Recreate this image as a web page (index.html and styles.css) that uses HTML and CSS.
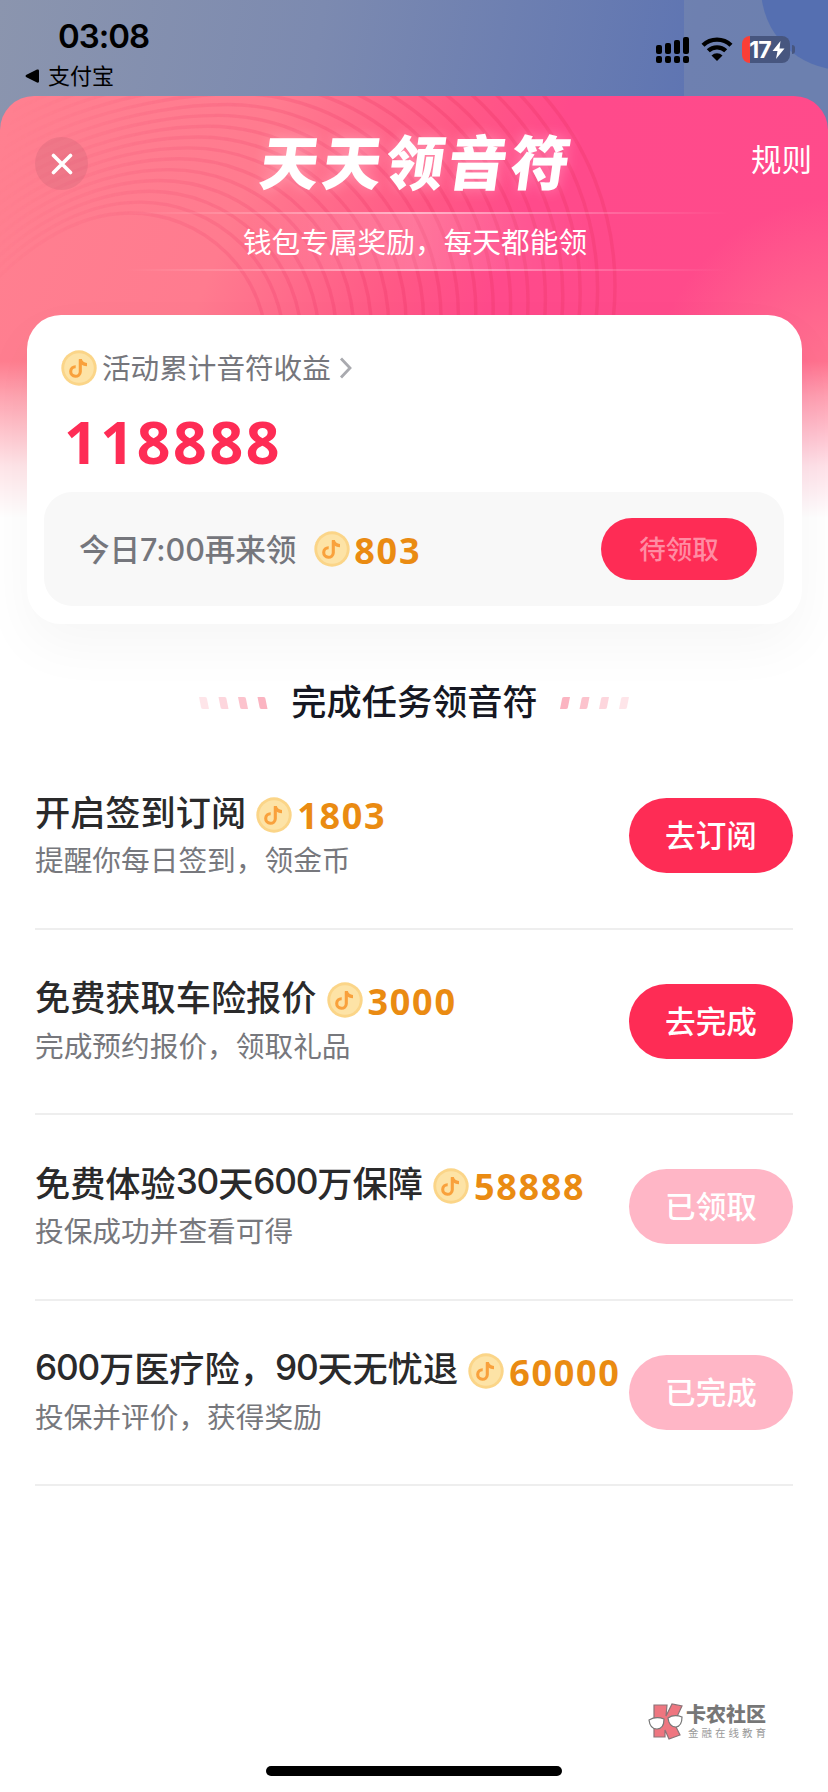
FILE: index.html
```html
<!DOCTYPE html>
<html lang="zh-CN">
<head>
<meta charset="utf-8">
<title>天天领音符</title>
<link rel="stylesheet" href="styles.css">
</head>
<body>
<svg width="0" height="0" class="defs">
  <symbol id="coin" viewBox="0 0 36 36">
    <circle cx="18" cy="18" r="17.7" fill="#fbd588"/>
    <circle cx="18" cy="18" r="14.8" fill="#fde3a6"/>
    <path d="M19.3 9.5v12.2a4.8 4.8 0 1 1-4.6-5" fill="none" stroke="#f9a13c" stroke-width="3.1"/>
    <path d="M17.8 9h3c.5 2.300 2.300 3.800 5.200 4v3.300c-3 0-5-1-6.500-2.500z" fill="#f9a13c"/>
  </symbol>
</svg>
<div class="screen">
  <header class="status">
    <svg class="status-bg" width="828" height="150" viewBox="0 0 828 150">
      <rect x="684" width="144" height="150" fill="#8593ae" opacity=".38"/>
      <circle cx="843" cy="-12" r="82" fill="#4e69b2" opacity=".75"/>
    </svg>
    <div class="status-left">
      <div class="time">03:08</div>
      <div class="back"><svg width="14" height="14" viewBox="0 0 14 14"><path d="M1 6q-1 1 0 2l11 5.500q2 .5 2-1v-11q0-1.500-2-1z"/></svg>支付宝</div>
    </div>
    <div class="status-right">
      <svg width="34" height="27" viewBox="0 0 34 27">
        <rect x="0" y="8" width="6" height="9" rx="2"/><rect x="9" y="6" width="6" height="11" rx="2"/><rect x="18" y="3" width="6" height="14" rx="2"/><rect x="27" y="0" width="6" height="17" rx="2"/>
        <rect x="0" y="19" width="6" height="7" rx="2"/><rect x="9" y="19" width="6" height="7" rx="2"/><rect x="18" y="19" width="6" height="7" rx="2"/><rect x="27" y="19" width="6" height="7" rx="2"/>
      </svg>
      <svg class="wifi" width="32" height="24" viewBox="0 0 32 24">
        <path d="M2 8.300a20 20 0 0 1 28 0M7.300 13.800a12.500 12.500 0 0 1 17.400 0" fill="none" stroke="#000" stroke-width="4.300"/>
        <path d="M10.500 18.500a8 8 0 0 1 11 0L16 24z"/>
      </svg>
      <div class="battery"><span>17</span><svg width="13" height="18" viewBox="0 0 13 18"><path d="M8.500 0 .5 10h5L4 18l8.500-10.500h-5z" fill="#fff"/></svg></div>
      <i class="nub"></i>
    </div>
  </header>
  <main class="sheet">
    <svg class="rings" width="828" height="420" viewBox="0 96 828 420">
      <defs>
        <linearGradient id="fade" gradientUnits="userSpaceOnUse" x1="0" x2="450" y1="96" y2="200"><stop offset=".03" stop-color="#fff" stop-opacity="0"/><stop offset=".35" stop-color="#fff" stop-opacity=".45"/><stop offset="1" stop-color="#fff"/></linearGradient>
        <mask id="ringMask" maskUnits="userSpaceOnUse" x="0" y="96" width="828" height="420"><rect x="0" y="96" width="828" height="420" fill="url(#fade)"/></mask>
      </defs>
      <g id="ringGroup" mask="url(#ringMask)" fill="none" stroke="#e8305f" stroke-opacity=".27" stroke-width="3.400"></g>
    </svg>
    <div class="topbar">
      <button class="close"><svg width="22" height="22" viewBox="0 0 22 22"><path d="M2.500 2.500l17 17m0-17l-17 17" stroke="#fff" stroke-width="3.600" stroke-linecap="round"/></svg></button>
      <h1>天天领音符</h1>
      <a class="rules">规则</a>
    </div>
    <p class="subtitle">钱包专属奖励，每天都能领</p>
    <section class="card">
      <div class="earn"><svg class="coin"><use href="#coin"/></svg><span>活动累计音符收益</span><svg class="chev" width="13" height="22" viewBox="0 0 13 22"><path d="M2 1.500 11 11l-9 9.500" fill="none" stroke="#a9aaaf" stroke-width="2.800"/></svg></div>
      <div class="total">118888</div>
      <div class="claim">
        <span class="when">今日7:00再来领</span>
        <svg class="coin"><use href="#coin"/></svg>
        <span class="amount">803</span>
        <button class="pill wait">待领取</button>
      </div>
    </section>
    <h2 class="section-title">
      <svg width="72" height="12" viewBox="0 0 72 12" fill="#fbb4c1"><path opacity=".35" d="M1 0h6q2 0 2 2l2 10H5q-2 0-2-2z"/><path opacity=".55" d="M20.500 0h6q2 0 2 2l2 10h-6q-2 0-2-2z"/><path opacity=".8" d="M40 0h6q2 0 2 2l2 10h-6q-2 0-2-2z"/><path d="M59.500 0h6q2 0 2 2l2 10h-6q-2 0-2-2z"/></svg>
      <span>完成任务领音符</span>
      <svg width="72" height="12" viewBox="0 0 72 12" fill="#fbb4c1"><path d="M3 2q0-2 2-2h6l-2 10q0 2-2 2H1z"/><path opacity=".8" d="M22.500 2q0-2 2-2h6l-2 10q0 2-2 2h-6z"/><path opacity=".55" d="M42 2q0-2 2-2h6l-2 10q0 2-2 2h-6z"/><path opacity=".35" d="M62 2q0-2 2-2h6l-2 10q0 2-2 2h-6z"/></svg>
    </h2>
    <ul class="tasks">
      <li><div class="info"><div class="name">开启签到订阅<svg class="coin"><use href="#coin"/></svg><span class="amount">1803</span></div><div class="desc">提醒你每日签到，领金币</div></div><button class="pill">去订阅</button></li>
      <li><div class="info"><div class="name">免费获取车险报价<svg class="coin"><use href="#coin"/></svg><span class="amount">3000</span></div><div class="desc">完成预约报价，领取礼品</div></div><button class="pill">去完成</button></li>
      <li><div class="info"><div class="name">免费体验<span class="num">30</span>天<span class="num">600</span>万保障<svg class="coin"><use href="#coin"/></svg><span class="amount">58888</span></div><div class="desc">投保成功并查看可得</div></div><button class="pill done">已领取</button></li>
      <li><div class="info"><div class="name"><span class="num">600</span>万医疗险，<span class="num">90</span>天无忧退<svg class="coin"><use href="#coin"/></svg><span class="amount">60000</span></div><div class="desc">投保并评价，获得奖励</div></div><button class="pill done">已完成</button></li>
    </ul>
    <footer class="brand">
      <svg width="36" height="37" viewBox="0 0 36 37">
        <path d="M6 2h13l-1 11L24 1l10 2-8 17 6 12-11 4-4-9v7H6z" fill="#ee7680" stroke="#8b7478" stroke-width="1.200"/>
        <path d="M1 17q7-4 15-1 0 10-7 10Q2 26 1 17zM20 15q6-4 14-1 0 9-6 10-7 0-8-9z" fill="#fff" stroke="#777" stroke-width="1.200"/>
      </svg>
      <div><b>卡农社区</b><small>金融在线教育</small></div>
    </footer>
    <div class="home"></div>
  </main>
</div>
<script src="rings.js"></script>
</body>
</html>
```
FILE: rings.js
```js
// Each ring: a gentle tail rising from the left edge, then a round arc down the right side.
const group = document.getElementById('ringGroup');
for (let i = 0; i < 21; i++) {
  const cx = 130 + 9.75 * i;
  const cy = 350 - 3.2 * i;
  const r = 137 + 7.65 * i;
  const top = cy - r;
  const p = document.createElementNS('http://www.w3.org/2000/svg', 'path');
  p.setAttribute('d',
    `M-30 ${top + 95} C20 ${top + 35} ${cx - r * 0.4} ${top} ${cx} ${top}` +
    ` A${r} ${r} 0 0 1 ${cx + r} ${cy} A${r} ${r} 0 0 1 ${cx + r * 0.98} ${cy + r * 0.2}`);
  group.appendChild(p);
}
```
FILE: styles.css
```css
* { box-sizing: border-box; }
body, h1, h2, p, ul { margin: 0; padding: 0; }
body { font-family: Inter, "Noto Sans CJK SC", sans-serif; background: #fff; }
button { border: 0; font: inherit; padding: 0; }
svg { display: block; flex: none; }
.defs { position: absolute; }
.screen { width: 828px; height: 1792px; overflow: hidden; display: flex; flex-direction: column; background: linear-gradient(100deg, #8b95ae 0, #7c8ab0 38%, #5f75b2 82%, #5c74b0 100%) 0 0 / 828px 150px no-repeat; }
.status { height: 96px; flex: none; display: flex; justify-content: space-between; position: relative; }
.status-bg { position: absolute; left: 0; top: 0; }
.status-left { padding: 15px 0 0 25px; }
.time { margin-left: 33px; font-size: 33px; line-height: 42px; font-weight: 600; letter-spacing: -1px; }
.back { display: flex; align-items: center; gap: 9px; font-size: 22px; line-height: 36px; font-family: "Noto Sans CJK SC", sans-serif; margin-top: -1px; }
.back svg { margin-top: 3px; }
.status-right { position: relative; display: flex; align-items: flex-start; padding: 37px 33px 0 0; }
.wifi { margin: 0 9px 0 11px; }
.battery { width: 48px; height: 27px; margin-top: -1px; border-radius: 8px; background: linear-gradient(90deg, #fb3e36 8px, #47567f 8px); color: #fff; display: flex; align-items: center; justify-content: center; padding-left: 2px; gap: 1px; font-weight: 700; font-size: 23px; letter-spacing: -.8px; }
.nub { width: 3px; height: 9px; margin: 8px 0 0 2px; border-radius: 0 4px 4px 0; background: #47567f; }
.sheet { position: relative; flex: 1; border-radius: 34px 34px 0 0; overflow: hidden; display: flex; flex-direction: column; background:
  linear-gradient(180deg, rgba(255,255,255,0) 265px, rgba(255,255,255,.3) 300px, rgba(255,255,255,.8) 370px, #fff 422px),
  radial-gradient(circle at 850px 300px, rgba(255,130,145,.9) 0, rgba(255,120,145,0) 200px),
  linear-gradient(112deg, #ff8090 0, #ff7b8f 28%, #ff5886 47%, #ff4a8b 57%, #ff4b8b 90%) #fff;
  background-size: 100% 100%, 100% 100%, 828px 440px; background-repeat: no-repeat; }
.rings { position: absolute; left: 0; top: 0; -webkit-mask-image: linear-gradient(#000 60%, transparent); }
.topbar { position: relative; height: 116px; display: flex; align-items: flex-start; padding: 41px 17px 0 35px; color: #fff; }
.close { width: 53px; height: 53px; border-radius: 50%; background: rgba(180,90,110,.22); display: flex; align-items: center; justify-content: center; }
h1 { font: 900 59px/70px "Noto Sans CJK SC", sans-serif; letter-spacing: 3.600px; transform: skewX(-8deg); margin: -12px 0 0 173px; text-shadow: 0 0 14px rgba(255,255,255,.3); }
.rules { font: 400 30.500px/44px "Noto Sans CJK SC", sans-serif; margin: -1px -1px 0 auto; }
.subtitle { position: relative; height: 59px; text-align: center; color: #fff; font: 400 28.700px/57px "Noto Sans CJK SC", sans-serif; padding-left: 2px; background:
  linear-gradient(90deg, transparent 15%, rgba(255,255,255,.45) 50%, transparent 88%) 0 0 / 100% 2px no-repeat,
  linear-gradient(90deg, transparent 15%, rgba(255,255,255,.45) 50%, transparent 88%) 0 100% / 100% 2px no-repeat,
  linear-gradient(90deg, transparent 30%, rgba(255,255,255,.18) 50%, transparent 72%); }
.card { position: relative; height: 309px; margin: 44px 26px 0 27px; padding: 35px 18px 0 17px; border-radius: 34px; background: #fff; box-shadow: 0 22px 55px rgba(0,0,0,.04); }
.coin { width: 36px; height: 36px; }
.earn { display: flex; align-items: center; margin-left: 17px; height: 36px; font: 400 28.600px/36px "Noto Sans CJK SC", sans-serif; color: #75767c; }
.earn span { margin: -2px 8px 0 5px; }
.earn .chev { margin-top: -1px; }
.total { font: 700 59px/70px "Noto Sans", sans-serif; letter-spacing: 2.600px; color: #fe2c55; margin: 20px 0 0 20px; }
.claim { height: 114px; margin-top: 16px; border-radius: 28px; background: #f8f8f8; display: flex; align-items: center; padding: 0 27px 0 35px; }
.when { font-size: 30.600px; font-weight: 500; color: #75767c; letter-spacing: -.1px; margin-top: -2px; }
.claim .coin { margin-left: 18px; }
.amount { font: 700 36px/36px "Noto Sans", sans-serif; letter-spacing: 1.700px; color: #ea8b12; }
.claim .amount { margin: 4px 0 0 4px; }
.pill { width: 164px; height: 75px; flex: none; border-radius: 40px; background: #fe2c55; color: #fff; font: 500 30.600px/73px "Noto Sans CJK SC", sans-serif; padding-bottom: 2px; }
.pill.done { background: #ffb6c6; }
.pill.wait { width: 156px; height: 62px; margin-left: auto; color: #ff8ca3; font-size: 26.500px; line-height: 60px; }
.section-title { display: flex; justify-content: center; align-items: center; gap: 21px; height: 50px; margin-top: 51px; font: 500 35.200px/50px "Noto Sans CJK SC", sans-serif; color: #161823; padding-left: 1px; }
.section-title svg { margin-top: 6px; }
.tasks { list-style: none; margin: 19px 35px 0 35px; }
.tasks li { height: 185.500px; border-bottom: 2px solid #eee; display: flex; justify-content: space-between; padding-top: 54px; }
.info { margin-top: -13px; white-space: nowrap; width: 594px; }
.name { display: flex; align-items: center; height: 50px; font-size: 35.200px; font-weight: 500; color: #2a2a2b; }
.num { letter-spacing: -1.200px; }
.name .coin { margin: 9px 0 0 10px; }
.name .amount { margin: 12px 0 0 5px; }
.desc { font: 400 28.700px/44px "Noto Sans CJK SC", sans-serif; color: #77787d; margin-top: 2px; }
.brand { display: flex; margin: 217px 0 0 648px; height: 38px; gap: 2px; color: #777; }
.brand div { display: flex; flex-direction: column; }
.brand b { font: 900 20px/22px "Noto Sans CJK SC", sans-serif; }
.brand small { font: 400 10.500px/15px "Noto Sans CJK SC", sans-serif; letter-spacing: 3px; margin-left: 2px; color: #999; }
.home { width: 296px; height: 10px; border-radius: 5px; background: #000; margin: 25px 0 0 266px; }
```
